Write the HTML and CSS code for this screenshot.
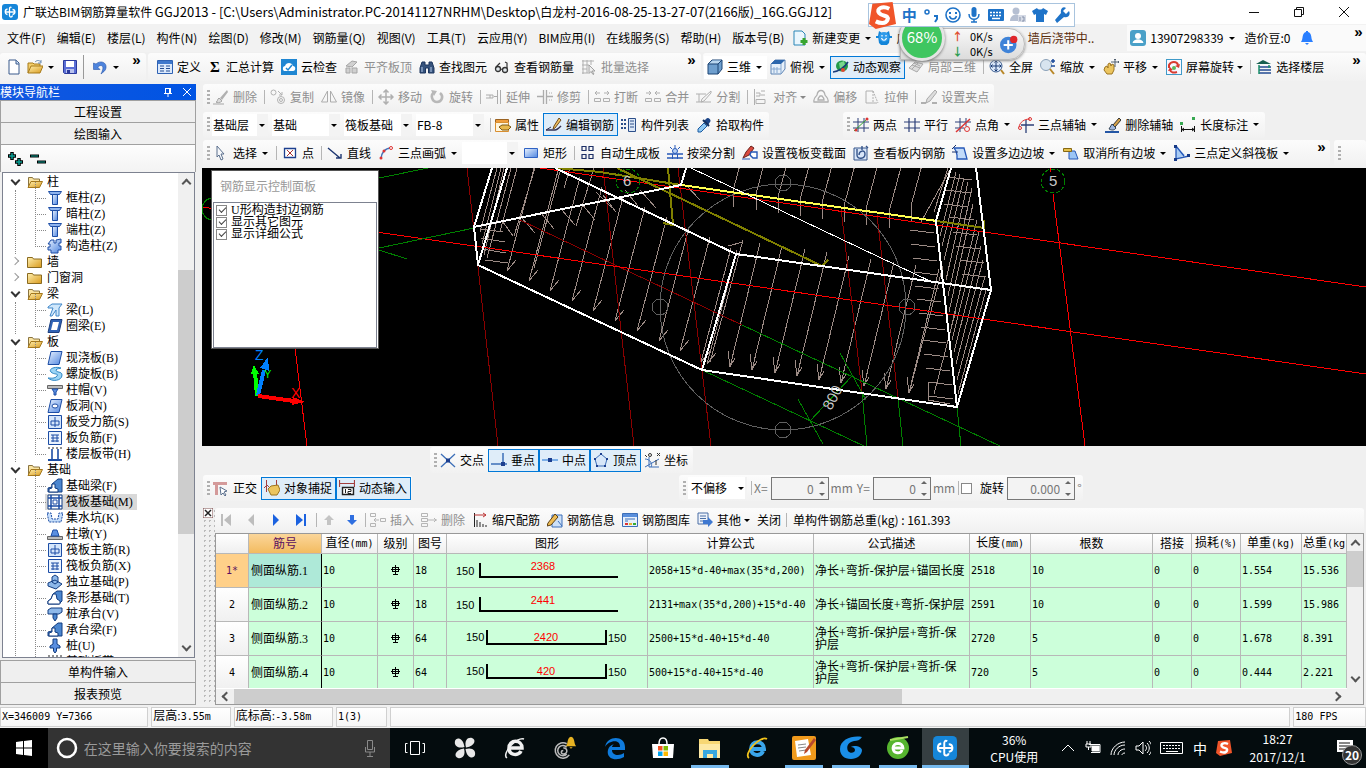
FILE: index.html
```html
<!DOCTYPE html>
<html lang="zh-CN">
<head>
<meta charset="utf-8">
<title>广联达BIM钢筋算量软件 GGJ2013</title>
<link rel="stylesheet" href="styles.css">
</head>
<body>
<svg class="defs" aria-hidden="true">
<defs>
<linearGradient id="gb" x1="0" y1="0" x2="1" y2="1"><stop offset="0" stop-color="#eaf3ff"/><stop offset="1" stop-color="#4f86e0"/></linearGradient>
<linearGradient id="gy" x1="0" y1="0" x2="1" y2="1"><stop offset="0" stop-color="#fff0b0"/><stop offset="1" stop-color="#d99a1c"/></linearGradient>
<symbol id="logo" viewBox="0 0 16 16"><rect width="16" height="16" rx="3" fill="#1686d9"/><path d="M9.500 3.500C8 2.500 7.500 4 7.500 5v6.500c0 2 2.500 2 3 0M3 8h9.500M5.500 5C2.500 5.500 2.500 10 5.500 10.500M10.500 5.500c3 0 3.500 4.500 0 5" stroke="#fff" stroke-width="1.300" fill="none"/></symbol>
<symbol id="new" viewBox="0 0 16 16"><path d="M3 1h7l3 3v11H3z" fill="#fff" stroke="#3b5a8c"/><path d="M10 1v4h3" fill="#cfe0f7" stroke="#3b5a8c"/></symbol>
<symbol id="open" viewBox="0 0 16 16"><path d="M1 14V4h5l1 1h6v3" fill="#f3cf6d" stroke="#a77a1a"/><path d="M1 14l3-7h12l-3 7z" fill="url(#gy)" stroke="#a77a1a"/><path d="M8 3c2-2 4-2 6 0M14 1v3h-3" stroke="#6a8db5" fill="none"/></symbol>
<symbol id="save" viewBox="0 0 16 16"><path d="M1.500 1.500h13v13h-12l-1-1z" fill="#5b6fd6" stroke="#2b3a9c"/><path d="M4 2h8v6H4z" fill="#fff"/><path d="M4 10h8v4H4z" fill="#b9c2ee"/><path d="M5 11h3v3H5z" fill="#2b3a9c"/></symbol>
<symbol id="undo" viewBox="0 0 16 16"><path d="M4 5c4-4 11-2 10 4-.5 3-3 4-5 6 2-4 3-8 0-8.500-2 0-2.500 1-3 2L8 10.500H1.500V4z" fill="#4d84dd" stroke="#2a56a8" stroke-width=".6"/></symbol>
<symbol id="define" viewBox="0 0 16 16"><path d="M.5 1.500h15v13H.5z" fill="#dce9fb" stroke="#2f62b4"/><path d="M1 2h14v3H1z" fill="#3f78cc"/><path d="M3 7h4M3 9.500h4M3 12h4M9 7h4M9 9.500h4M9 12h4" stroke="#234d93"/></symbol>
<symbol id="cloud" viewBox="0 0 16 16"><rect width="16" height="16" fill="#1f86d2"/><path d="M3 12c-2-2-1-5 1-5 1-4 7-4 8 0 3 0 3 5 0 5z" fill="#fff"/><path d="M5 9l2 2 4-5" stroke="#1f86d2" stroke-width="1.500" fill="none"/></symbol>
<symbol id="gslab" viewBox="0 0 16 16"><path d="M2 7l6-5 5 1-5 5zM2 9h4v5H2zM8 9h5v5H8z" fill="#d0d0d0" stroke="#a5a5a5"/></symbol>
<symbol id="bino" viewBox="0 0 16 16"><path d="M3 3h3v3h4V3h3l2 6v5H9.500V9h-3v5H1V9z" fill="#35527c" stroke="#1c355d"/><path d="M3 8v5M12 8v5" stroke="#b7ccec"/></symbol>
<symbol id="glass" viewBox="0 0 16 16"><circle cx="4" cy="10" r="2.500" fill="#dfe6ea" stroke="#333" stroke-width="1.300"/><circle cx="11" cy="11" r="2.500" fill="#dfe6ea" stroke="#333" stroke-width="1.300"/><path d="M2 8l4-4M13 9V4l-2-1M6 10l3 .5" stroke="#333" stroke-width="1.200" fill="none"/></symbol>
<symbol id="ggrid" viewBox="0 0 16 16"><path d="M1 2h12M1 6h7M1 10h5M1 14h6M2 1v14M6 1v13M10 1v5" stroke="#b0b0b0" fill="none"/><path d="M8 6l6 6-3 0 2 3-1 .5-2-3-2 2z" fill="#eee" stroke="#a0a0a0"/></symbol>
<symbol id="cube" viewBox="0 0 16 16"><path d="M1 5l4-4h10v9l-4 5H1z" fill="#6f9fce" stroke="#1d4474"/><path d="M1.500 5l4-3.500h9L11 5z" fill="#b9d6ef"/><path d="M1 5h10v10M11 5l4-4" fill="none" stroke="#1d4474"/></symbol>
<symbol id="cubetop" viewBox="0 0 16 16"><path d="M1 5l4-4h10v9l-4 5H1z" fill="#e6f0fa" stroke="#5d83b3"/><path d="M1 5l4-4h10l-4 4z" fill="#2c67ad"/><path d="M11 5v10M4 8v6M7 8v6M1 10h10" stroke="#86a8d0"/></symbol>
<symbol id="orbit" viewBox="0 0 16 16"><ellipse cx="9" cy="7" rx="6" ry="5.500" fill="#239a49"/><path d="M6 4l5-2 1 4-5 4z" fill="#78d68d"/><path d="M0 13C5 13 12 8 15 3" stroke="#173b7b" fill="none" stroke-width="1.500"/><circle cx="10" cy="11" r="2" fill="#e24731"/></symbol>
<symbol id="gray3d" viewBox="0 0 16 16"><path d="M1 9l6-6 8 2-6 8z" fill="#ddd" stroke="#aaa"/><path d="M4 6l8 3M6 4l6 3M4 10l6-6" stroke="#aaa"/></symbol>
<symbol id="zoomall" viewBox="0 0 16 16"><circle cx="7" cy="7" r="6" fill="#dbe8fa" stroke="#3c5d8f"/><path d="M7 2v10M2 7h10M5.500 3.500L7 2l1.500 1.500M5.500 10.500L7 12l1.500-1.500M3.500 5.500L2 7l1.500 1.500M10.500 5.500L12 7l-1.500 1.500" stroke="#183972" fill="none"/><path d="M12 11l3 4" stroke="#b88728" stroke-width="2"/></symbol>
<symbol id="zoom" viewBox="0 0 16 16"><circle cx="6" cy="6" r="5.500" fill="#d8e4ef" stroke="#8aa0b8"/><path d="M10 10l4 5" stroke="#b88728" stroke-width="2"/><path d="M11 2h4M13 0v4M11 7h4" stroke="#1b4a9a" stroke-width="1.500"/></symbol>
<symbol id="hand" viewBox="0 0 16 16"><path d="M2 8l2-1 1 2V5l2-1 1 3 1-2 2 1v5l-2 4H4L1 11z" fill="#ecc55f" stroke="#9d7521"/><path d="M12 0v8M8 3h8M11 1l1-1 1 1M15 2l1 1-1 1" stroke="#526070" fill="none"/></symbol>
<symbol id="rot3" viewBox="0 0 16 16"><rect x=".5" y=".5" width="15" height="15" fill="#f7f7ff" stroke="#3f9ac8"/><path d="M3 9V6c2-4 8-4 9 0M11 13c-3 1-6 1-7-2" stroke="#d83b30" stroke-width="2" fill="none"/><path d="M14 5l-1 4-4-2zM2 12l2-4 3 3z" fill="#d83b30"/><circle cx="8" cy="9" r="2" fill="#5cb85c"/></symbol>
<symbol id="floors" viewBox="0 0 16 16"><path d="M0 5l7-4 8 4z" fill="#175e4f"/><path d="M3 8h12M3 11h12M3 14h12" stroke="#234b93" stroke-width="1.500"/><path d="M3 6v9M13 6v3" stroke="#1b8f6a" stroke-width="1.500"/></symbol>
<symbol id="chg" viewBox="0 0 16 16"><path d="M2 1h8l3 3v11H2z" fill="#eaf6fd" stroke="#2a86b7"/><path d="M12 8v7M8.500 11.500h7" stroke="#38a52f" stroke-width="3"/></symbol>
<symbol id="pig" viewBox="0 0 16 16"><path d="M3 1l3 2h4l3-2 1 5-1 7-2 2H5l-2-2-1-7z" fill="#1485d8"/><circle cx="8" cy="7" r="5" fill="#2f9bea"/><path d="M5.500 8c1 3 4 3 5 0" stroke="#fff" stroke-width="1.200" fill="none"/><path d="M6 5v1.500M10 5v1.500" stroke="#fff" stroke-width="1.200"/><path d="M0 7h3M13 7h3" stroke="#1485d8" stroke-width="2"/></symbol>
<symbol id="user" viewBox="0 0 16 16"><rect width="16" height="16" rx="3" fill="#4aa0c8"/><circle cx="8" cy="6" r="3" fill="#fff"/><path d="M2.500 13c1-5 10-5 11 0z" fill="#fff"/></symbol>
<symbol id="bell" viewBox="0 0 16 16"><path d="M7 1h2v1c4 1 3 6 4 8l1 2H2l1-2c1-2 0-7 4-8z" fill="#2a7fff"/><path d="M6 13h4l-2 2z" fill="#2a7fff"/></symbol>
<symbol id="brush" viewBox="0 0 16 16"><path d="M14 1L7 9l2 2 6-8z" fill="#b0b0b0"/><path d="M6 9l3 3c-2 2-5 2-6 1 2 0 1-3 3-4z" fill="#ddd" stroke="#a5a5a5"/><path d="M0 15h11" stroke="#a5a5a5"/></symbol>
<symbol id="copy" viewBox="0 0 16 16" fill="none" stroke="#b2b2b2"><circle cx="3.500" cy="3.500" r="2.500"/><circle cx="11" cy="11" r="3.500"/><circle cx="11" cy="11" r="1.500"/><path d="M8 2l4 4M12 3v3H9"/></symbol>
<symbol id="mirror" viewBox="0 0 16 16" fill="none" stroke="#acacac"><path d="M6.500 2v11L.5 13zM9.500 2v11l6 0z"/></symbol>
<symbol id="move" viewBox="0 0 16 16" fill="none" stroke="#b0b0b0" stroke-width="1.500"><path d="M8 1v14M1 8h14M5.500 3.500L8 1l2.500 2.500M5.500 12.500L8 15l2.500-2.500M3.500 5.500L1 8l2.500 2.500M12.500 5.500L15 8l-2.500 2.500"/></symbol>
<symbol id="rotate" viewBox="0 0 16 16"><path d="M5 3.500C1 6 3 13 8 13s7-6 3-9" fill="none" stroke="#b8b8b8" stroke-width="2.600"/><path d="M2 1l6 1-3 5z" fill="#b8b8b8"/></symbol>
<symbol id="extend" viewBox="0 0 16 16" fill="none" stroke="#acacac"><path d="M0 6h7v3H0M8 7.500h3M11.500 1v14M14.500 1v14M4 6v3"/></symbol>
<symbol id="trim" viewBox="0 0 16 16" fill="none" stroke="#acacac"><path d="M6.500 1v14M9.500 1v14M0 7.500h6M10 7.500h6" stroke-width="1.300"/><path d="M12 4h3M12 11h3" stroke-dasharray="1 1"/></symbol>
<symbol id="break" viewBox="0 0 16 16" fill="none" stroke="#b0b0b0"><path d="M1 4h5M10 4h5M3 2L1 4l2 2M13 2l2 2-2 2M.5 9.500h6v3h-6zM9.500 9.500h6v3h-6z"/></symbol>
<symbol id="merge" viewBox="0 0 16 16" fill="none" stroke="#b0b0b0"><path d="M1 4h5M10 4h5M4 2l2 2-2 2M12 2l-2 2 2 2M.5 9.500h6v3h-6zM9.500 9.500h6v3h-6z"/></symbol>
<symbol id="split" viewBox="0 0 16 16" fill="none" stroke="#b0b0b0"><path d="M0 5h10M0 13h15M3 5v8M15 2L6 10l-1 3 3-1 7-8z"/></symbol>
<symbol id="align" viewBox="0 0 16 16" fill="none" stroke="#b0b0b0"><path d="M1.500 0v16M3 4h4v3H3M3 10.500h9v4H3zM8 2h4M12 6H8"/></symbol>
<symbol id="offset" viewBox="0 0 16 16" fill="none" stroke="#b0b0b0" stroke-width="1.300"><path d="M1 13c-1-4 2-5 3-7 1-6 7-6 8 0 1 2 4 3 3 7zM5 11c0-2 1-3 2-4h2c1 1 2 2 2 4z"/></symbol>
<symbol id="stretch" viewBox="0 0 16 16" fill="none" stroke="#b0b0b0"><path d="M9 2H2v12h11"/><path d="M9 2v12M9 2l5 12" stroke-dasharray="2 1"/></symbol>
<symbol id="grip" viewBox="0 0 16 16"><path d="M0 14h5M11 14h5" stroke="#b0b0b0" stroke-width="2"/><path d="M14 1l-8 9-1 4 4-2 7-9z" fill="#ddd" stroke="#aaa"/></symbol>
<symbol id="prop" viewBox="0 0 16 16"><path d="M.5 2.500h13v3H.5z" fill="#ef9d3c" stroke="#9b6322"/><path d="M.5 5.500h13v9H.5z" fill="#fff5dd" stroke="#d98f30"/><path d="M4 10l3-2h6l3 2-3 3H7z" fill="#e8b84c" stroke="#7d5a17"/></symbol>
<symbol id="editbar" viewBox="0 0 16 16"><path d="M0 13h9c2 0 4-2 6-4" stroke="#335" stroke-width="1.600" fill="none"/><path d="M13 1l2 2-6 8-2 1 1-3z" fill="#f0c15f" stroke="#704c1d"/><path d="M0 13l5-3" stroke="#335" fill="none"/></symbol>
<symbol id="list" viewBox="0 0 16 16"><path d="M0 3h5M0 7h5M0 11h5" stroke="#2c4f8a" stroke-width="2" stroke-dasharray="2 1"/><path d="M7.500 1.500h7v13h-7z" fill="#dbe7f7" stroke="#2c4f8a"/><path d="M9 4h4M9 7h4M9 10h4" stroke="#2c4f8a"/></symbol>
<symbol id="pick" viewBox="0 0 16 16"><path d="M8 6l3 3-6 6-3 0 0-3z" fill="#8ec8f3" stroke="#1c5aa0"/><path d="M10 2c2-3 6 1 4 3l-2 3-4-4z" fill="#1c4587"/><path d="M7 3l6 6" stroke="#12305f" stroke-width="2"/></symbol>
<symbol id="twop" viewBox="0 0 16 16" fill="none"><path d="M0 5h16M0 11h16M5 1v14M11 1v14" stroke="#2c3f78"/><path d="M1 14L14 2" stroke="#38a52f"/><circle cx="3" cy="13" r="1.500" fill="#d33"/><circle cx="14" cy="2" r="1.500" fill="#d33"/></symbol>
<symbol id="para" viewBox="0 0 16 16"><path d="M0 5h16M0 11h16M5 1v14M11 1v14" stroke="#2c3f78" fill="none" stroke-width="1.200"/></symbol>
<symbol id="pang" viewBox="0 0 16 16" fill="none"><path d="M0 5h16M0 11h9M5 1v14M11 1v8" stroke="#2c3f78"/><path d="M1 15L15 2" stroke="#d33" stroke-width="1.500"/><circle cx="12" cy="12" r="2.500" stroke="#d33"/></symbol>
<symbol id="arcax" viewBox="0 0 16 16" fill="none"><path d="M1 10C2 5 6 2 12 2" stroke="#d33"/><path d="M3 8h13M8 3v13" stroke="#2c3f78" stroke-width="1.300"/><circle cx="12" cy="2" r="1.500" stroke="#d33"/><circle cx="2" cy="11" r="1.500" stroke="#d33"/></symbol>
<symbol id="delax" viewBox="0 0 16 16"><path d="M14 1L8 8l2 2 6-7z" fill="#d5a249" stroke="#333"/><path d="M7 7l4 4c-2 3-5 2-7 1z" fill="#9fb6dd" stroke="#345"/><path d="M0 15h14" stroke="#2456a5" stroke-width="2"/></symbol>
<symbol id="dim" viewBox="0 0 16 16"><path d="M1.500 9v6M14.500 9v6M2 12.500h12M4 11l-2 1.500L4 14M12 11l2 1.500-2 1.500" stroke="#111" fill="none"/><path d="M0 5h3v3H0zM12 0h3v3h-3z" fill="#38a852"/></symbol>
<symbol id="cursor" viewBox="0 0 16 16"><path d="M4 1l7 8H8l2 5-2 1-2-5-2 2z" fill="#f6f8fb" stroke="#5a6f8c"/></symbol>
<symbol id="ptx" viewBox="0 0 16 16"><path d="M2.500 3.500h11v9h-11z" fill="#fff" stroke="#1c3f8f" stroke-width="1.300"/><path d="M5 5l6 6M11 5l-6 6" stroke="#a33"/></symbol>
<symbol id="line" viewBox="0 0 16 16"><path d="M1 3l12 10M9 13h5V9" stroke="#1c3570" fill="none" stroke-width="1.400"/></symbol>
<symbol id="arc" viewBox="0 0 16 16"><path d="M3 14C3 8 7 3 13 3" stroke="#4472b8" fill="none" stroke-width="1.500"/><circle cx="3" cy="13" r="1.500" fill="#d33"/><circle cx="6" cy="6" r="1.500" fill="#d33"/><circle cx="13" cy="3" r="1.500" fill="#fff" stroke="#d33"/></symbol>
<symbol id="rect" viewBox="0 0 16 16"><path d="M1.500 3.500h13v9h-13z" fill="url(#gb)" stroke="#2f62c4"/></symbol>
<symbol id="auto" viewBox="0 0 16 16" fill="none" stroke="#1d2f66" stroke-width="1.200"><path d="M2 1.500h4v4H2zM9 1.500h4v4H9zM2 9.500h4v4H2zM9 9.500h4v4H9z"/></symbol>
<symbol id="beam" viewBox="0 0 16 16"><path d="M0 9h16M0 13h16" stroke="#2658b8" stroke-width="1.500"/><circle cx="8" cy="6" r="2.500" fill="#b7d1f5" stroke="#2658b8"/><path d="M8 0v3M3 2l2 2M13 2l-2 2M5.500 9v5M10.500 9v5" stroke="#2658b8"/></symbol>
<symbol id="sect" viewBox="0 0 16 16"><path d="M1 13l3-6 5-6 3 2-5 7z" fill="#d94a3f" stroke="#6b211b"/><path d="M9 7h6v6h-4l-3-3z" fill="#fff" stroke="#2658b8" stroke-width="1.400"/><path d="M0 14h8" stroke="#2658b8"/></symbol>
<symbol id="viewbar" viewBox="0 0 16 16"><path d="M1 3h13v12H1z" fill="#d9e6f8" stroke="#35548a"/><path d="M4 4v6c0 5 8 4 8-1s-6-3-6 1M9 1v4M13 1l2 2" stroke="#35548a" fill="none" stroke-width="1.400"/></symbol>
<symbol id="slope" viewBox="0 0 16 16"><path d="M4 6L2 3h10l3 11H5v-4z" fill="#c3dbf9" stroke="#2658b8" stroke-width="1.300"/><path d="M0 7l6 0M0 4l4-4" stroke="#1c3570"/></symbol>
<symbol id="unslope" viewBox="0 0 16 16"><path d="M6 6h6l3 8H6z" fill="#9cc5f5" stroke="#2658b8"/><path d="M.5 3.500h8v3h-8z" fill="#e5c14c" stroke="#876812"/></symbol>
<symbol id="tri" viewBox="0 0 16 16"><path d="M2 2v12l9-4z" fill="#a9ccf5"/><path d="M2 1v13l13-3M2 1l8 10" stroke="#2658b8" stroke-width="1.300" fill="none"/><path d="M0 0h3v3H0zM0 13h3v3H0zM13 9h3v3h-3z" fill="#173a86"/></symbol>
<symbol id="isect" viewBox="0 0 16 16"><path d="M1 2l14 13M15 2L1 15" stroke="#3d6fb8" fill="none" stroke-width="1.300"/><path d="M6 6.500h4v4H6z" fill="#1c3f8f"/></symbol>
<symbol id="perp" viewBox="0 0 16 16"><path d="M0 12h16M12 1v12" stroke="#3d6fb8" stroke-width="1.500"/><path d="M10 10h4v4h-4z" fill="#1c3f8f"/></symbol>
<symbol id="mid" viewBox="0 0 16 16"><path d="M0 8h16" stroke="#5c9ae0" stroke-width="1.500"/><path d="M6 6h4v4H6z" fill="#1c3f8f"/></symbol>
<symbol id="vert" viewBox="0 0 16 16"><path d="M8 2l6 5-2 7H4L2 7z" fill="#d7e7f9" stroke="#3d6fb8"/><path d="M7 1h2v2H7zM1 6h2v2H1zM13 6h2v2h-2zM3 13h2v2H3zM11 13h2v2h-2z" fill="#1c3f8f"/></symbol>
<symbol id="coord" viewBox="0 0 16 16"><path d="M1 7c5 0 8 5 6 8M1 15l14-8M5 5v10h10" stroke="#3d6fb8" fill="none"/><circle cx="6" cy="3" r="1.500" fill="none" stroke="#333"/><path d="M1 3l2 2M13 1l3 3M16 1l-3 3M12 8v5" stroke="#333"/></symbol>
<symbol id="ortho" viewBox="0 0 16 16"><path d="M0 2h14v3H5v10H2V5H0z" fill="#d49a9a"/><path d="M7 7l7 4-3 1 2 3-1 1-2-3-2 2z" fill="#fff" stroke="#5a6f8c"/></symbol>
<symbol id="osnap" viewBox="0 0 16 16"><path d="M2.500 0v12M12.500 0v6M0 8l3-3 3 3" stroke="#a33f3f" fill="none"/><path d="M4 9l3-3 7-1 2 5-3 5H7z" fill="#ecc55f" stroke="#9d7521"/></symbol>
<symbol id="dyn" viewBox="0 0 16 16"><path d="M.5 0v7M15.500 0v7M1 3.500h14" stroke="#a33f3f" stroke-width="1.200"/><path d="M3.500 7.500h11v7h-11z" fill="#fff" stroke="#222" stroke-width="1.400"/><path d="M6.500 9v4M9 9.500h3v2H9v2h3" stroke="#222" fill="none"/></symbol>
<symbol id="first" viewBox="0 0 16 16"><path d="M3 2h2v12H3zM13 2v12L6 8z" fill="#bdbdbd"/></symbol>
<symbol id="prev" viewBox="0 0 16 16"><path d="M11 2v12L5 8z" fill="#bdbdbd"/></symbol>
<symbol id="next" viewBox="0 0 16 16"><path d="M5 2v12l6-6z" fill="#1b62e0"/></symbol>
<symbol id="last" viewBox="0 0 16 16"><path d="M3 2v12l7-6z" fill="#1b62e0"/><path d="M11 2h2v12h-2z" fill="#1b62e0"/></symbol>
<symbol id="up" viewBox="0 0 16 16"><path d="M8 3l5 5h-3v5H6V8H3z" fill="#c4c4c4"/></symbol>
<symbol id="down" viewBox="0 0 16 16"><path d="M8 13l5-5h-3V3H6v5H3z" fill="#2f6fe0"/></symbol>
<symbol id="ins" viewBox="0 0 16 16" fill="none" stroke="#b5b5b5"><path d="M.5 1.500h5v3h-5zM.5 11.500h5v3h-5zM10.500 6.500h5v3h-5zM4 8h5M6 6L4 8l2 2"/></symbol>
<symbol id="del" viewBox="0 0 16 16" fill="none" stroke="#b5b5b5"><path d="M.5 1.500h6v3h-6zM.5 6.500h6v3h-6zM.5 11.500h6v3h-6zM7 8h9M13 6l2 2-2 2"/></symbol>
<symbol id="scale" viewBox="0 0 16 16"><path d="M2.500 1v14M5 8v7M8 10v5M11 12v3M14 13v2" stroke="#222"/><path d="M2 3h12M11 1l3 2-3 2" stroke="#b33" fill="none"/></symbol>
<symbol id="info" viewBox="0 0 16 16"><path d="M5 3h10v12H5z" fill="#cde0f7" stroke="#3d6fb8"/><path d="M1 11l7-9 3 3-7 8-4 1z" fill="#eebc55" stroke="#5d4113"/><path d="M11 9l4 5" stroke="#3d6fb8"/></symbol>
<symbol id="lib" viewBox="0 0 16 16"><path d="M.5 1.500h15v13H.5z" fill="#e7f0fb" stroke="#3d6fb8"/><path d="M1 2h14v3H1z" fill="#5a8fdc"/><path d="M3 7h10M3 9h3" stroke="#3d6fb8"/><path d="M3 12h3" stroke="#d33" stroke-width="2"/><path d="M7 12h3" stroke="#e5b52a" stroke-width="2"/><path d="M11 12h3" stroke="#3a3" stroke-width="2"/></symbol>
<symbol id="other" viewBox="0 0 16 16"><path d="M1 1h10v11H1z" fill="#eef3fb" stroke="#4a6fa5"/><path d="M3 4h6M3 6.500h6M3 9h4" stroke="#4a6fa5"/><path d="M6 8h5V5l5 5-5 5v-3H6z" fill="#3f78d0"/></symbol>
<symbol id="fopen" viewBox="0 0 16 16"><path d="M1.500 13V3.500h4l1 1.500h6v2" fill="#f9e3a0" stroke="#8a7440"/><path d="M1 13.500l3-6h11.500l-3 6z" fill="url(#gy)" stroke="#a5781c"/></symbol>
<symbol id="fclosed" viewBox="0 0 16 16"><path d="M.5 13.500v-10h5l1 1.500h8v8.500z" fill="url(#gy)" stroke="#8a6a20"/></symbol>
<symbol id="col" viewBox="0 0 16 16"><path d="M1.500 1.500h13l-2 3h-9z" fill="#8fb4ee" stroke="#1c4da5"/><path d="M5.500 4.500h5v10h-5z" fill="url(#gb)" stroke="#1c4da5"/></symbol>
<symbol id="ccol" viewBox="0 0 16 16"><path d="M4 2h3v3h2v-3l5-1v4h-2v3h2v4h-3v3H4v-3H1V9h2V6H1z" fill="url(#gb)" stroke="#1c4da5"/></symbol>
<symbol id="bm" viewBox="0 0 16 16"><path d="M1 5l4-3h10l-3 4v8H9V8L5 14H3l3-8H1z" fill="#cfe7fb" stroke="#3f86c8"/></symbol>
<symbol id="ring" viewBox="0 0 16 16"><path d="M4 1.500h11l-3 13H1z" fill="#2f62b4" stroke="#1c3f80"/><path d="M6 4h6l-2 8H4z" fill="#fff"/></symbol>
<symbol id="slab" viewBox="0 0 16 16"><path d="M4 1.500h11l-3 13H1z" fill="url(#gb)" stroke="#1c4da5"/></symbol>
<symbol id="spiral" viewBox="0 0 16 16"><path d="M14 2C8 0 1 3 4 6s8 1 6 4-7 2-9 2c4 4 14 3 14-3 0-4-6-2-6-5 1-2 4-1 5-2z" fill="#9bd4f5" stroke="#2e86c4"/></symbol>
<symbol id="cap" viewBox="0 0 16 16"><path d="M.5 3.500h15v3H.5z" fill="#bbb" stroke="#666"/><path d="M5 7h6l-2 3v3H7v-3z" fill="#5b8fe0" stroke="#1c4da5"/></symbol>
<symbol id="hole" viewBox="0 0 16 16"><path d="M4 1.500h11l-3 13H1z" fill="url(#gb)" stroke="#1c4da5"/><ellipse cx="8" cy="8" rx="3" ry="2" fill="#fff" stroke="#1c4da5"/></symbol>
<symbol id="rb1" viewBox="0 0 16 16"><path d="M1.500 1.500h13v13h-13z" fill="#d5e6fb" stroke="#1c4da5"/><path d="M4 7v4h8V7M8 3v10M4 7h8" stroke="#1c4da5" fill="none"/></symbol>
<symbol id="rb2" viewBox="0 0 16 16"><path d="M1.500 1.500h13v13h-13z" fill="#eaf3ff" stroke="#1c4da5"/><path d="M4 5h8M4 11h8M4 8h8M6 5v7M10 5v7" stroke="#1c4da5" fill="none"/></symbol>
<symbol id="band" viewBox="0 0 16 16"><path d="M1 14h14" stroke="#1c4da5" stroke-width="2"/><path d="M1 2h14" stroke="#222" stroke-dasharray="2 2"/><path d="M5 3v10M11 3v10" stroke="#1c4da5" stroke-width="1.600"/></symbol>
<symbol id="fbeam" viewBox="0 0 16 16"><path d="M1 14v-4l4-1V6l6-5h4v13z" fill="#4b86cf" stroke="#123c80"/><path d="M2 14v-3l3-1V6h3v4l3 1v3z" fill="#fff" stroke="#123c80"/></symbol>
<symbol id="raft" viewBox="0 0 16 16"><path d="M1 1h14v14H1z" fill="#fff" stroke="#123c80"/><path d="M4 1v14M12 1v14M1 4h14M1 12h14" stroke="#1c4da5" stroke-width="1.500"/><path d="M6 6h4v4H6z" fill="none" stroke="#1c4da5"/></symbol>
<symbol id="pit" viewBox="0 0 16 16"><path d="M0 3h4l1 6h6l1-6h4l-2 9H2z" fill="#c6defa" stroke="#1c4da5" stroke-dasharray="2 1"/></symbol>
<symbol id="pier" viewBox="0 0 16 16"><path d="M.5 10.500h15v3H.5z" fill="#bbb" stroke="#666"/><path d="M4 10l2-6h4l2 6z" fill="#5b8fe0" stroke="#1c4da5"/></symbol>
<symbol id="foot" viewBox="0 0 16 16"><path d="M1 9l7-3 7 4-6 5-8-3zM5 3l3-2 3 2v5L8 10 5 8z" fill="#8db8ea" stroke="#123c80"/></symbol>
<symbol id="strip" viewBox="0 0 16 16"><path d="M1 14v-3l3-2 2-5 4-3h5v10l-3 3z" fill="#4b86cf" stroke="#123c80"/><path d="M1 14v-3l3-2 2-5h3l1 5 3 2v3z" fill="#fff" stroke="#123c80"/></symbol>
<symbol id="pcap" viewBox="0 0 16 16"><path d="M1 4l3-2h11v4l-3 2H1z" fill="#8db8ea" stroke="#123c80"/><path d="M6 8h4v4l-2 3-2-3z" fill="#4b86cf" stroke="#123c80"/></symbol>
<symbol id="pile" viewBox="0 0 16 16"><path d="M6 1h4v5l3 2v2H9.500v3L8 15l-1.500-2v-3H3V8l3-2z" fill="#5b8fe0" stroke="#123c80"/></symbol>
<symbol id="sogou" viewBox="0 0 16 16"><path d="M2 1l12-1 2 13-12 3-4-3z" fill="#f0552a"/><path d="M12 4C8 2 4 4 6 6.500s6 1 5 4-5 2-7 1" stroke="#fff" stroke-width="2.400" fill="none"/></symbol>
</defs>
</svg>

<header class="titlebar">
  <svg class="i"><use href="#logo"/></svg>
  <h1>广联达BIM钢筋算量软件 <span>GGJ2013 - [C:\Users\Administrator.PC-20141127NRHM\Desktop\</span>白龙村<span>-2016-08-25-13-27-07(2166</span>版<span>)_16G.GGJ12]</span></h1>
  <div class="winbtns">
    <button aria-label="最小化"><svg viewBox="0 0 12 12"><path d="M1 6.500h10"/></svg></button>
    <button aria-label="还原"><svg viewBox="0 0 12 12"><path d="M3.500 3.500v-2h7v7h-2M1.500 3.500h7v7h-7z"/></svg></button>
    <button aria-label="关闭"><svg viewBox="0 0 12 12"><path d="M1 1l10 10M11 1L1 11"/></svg></button>
  </div>
</header>

<nav class="menubar">
  <div class="menus">
    <button>文件(F)</button><button>编辑(E)</button><button>楼层(L)</button><button>构件(N)</button><button>绘图(D)</button><button>修改(M)</button><button>钢筋量(Q)</button><button>视图(V)</button><button>工具(T)</button><button>云应用(Y)</button><button>BIM应用(I)</button><button>在线服务(S)</button><button>帮助(H)</button><button>版本号(B)</button>
    <button class="t dd"><svg class="i"><use href="#chg"/></svg>新建变更</button>
    <button class="t"><svg class="i"><use href="#pig"/></svg>广</button>
  </div>
  <a class="news" href="#">墙后浇带中..</a>
  <div class="account">
    <button class="t dd"><svg class="i"><use href="#user"/></svg>13907298339</button>
    <span>造价豆:0</span>
    <svg class="i"><use href="#bell"/></svg>
    <button class="more">»</button>
  </div>
</nav>

<div class="toprow">
  <div class="bar file">
    <button class="t" aria-label="新建"><svg class="i"><use href="#new"/></svg></button>
    <button class="t dd" aria-label="打开"><svg class="i"><use href="#open"/></svg></button>
    <button class="t" aria-label="保存"><svg class="i"><use href="#save"/></svg></button>
    <span class="sep tall"></span>
    <button class="t dd" aria-label="撤销"><svg class="i"><use href="#undo"/></svg></button>
    <button class="more">»</button>
  </div>
  <div class="bar">
    <span class="lead"></span>
    <button class="t"><svg class="i"><use href="#define"/></svg>定义</button>
    <button class="t"><b class="sigma">Σ</b>汇总计算</button>
    <button class="t"><svg class="i"><use href="#cloud"/></svg>云检查</button>
    <button class="t" disabled><svg class="i"><use href="#gslab"/></svg>平齐板顶</button>
    <button class="t"><svg class="i"><use href="#bino"/></svg>查找图元</button>
    <button class="t"><svg class="i"><use href="#glass"/></svg>查看钢筋量</button>
    <button class="t" disabled><svg class="i"><use href="#ggrid"/></svg>批量选择</button>
    <button class="more">»</button>
  </div>
  <div class="bar view">
    <button class="t dd wh"><svg class="i"><use href="#cube"/></svg>三维</button>
    <button class="t dd"><svg class="i"><use href="#cubetop"/></svg>俯视</button>
    <button class="t on"><svg class="i"><use href="#orbit"/></svg>动态观察</button>
    <button class="t" disabled><svg class="i"><use href="#gray3d"/></svg>局部三维</button>
    <span class="sep"></span>
    <button class="t"><svg class="i"><use href="#zoomall"/></svg>全屏</button>
    <button class="t dd"><svg class="i"><use href="#zoom"/></svg>缩放</button>
    <button class="t dd"><svg class="i"><use href="#hand"/></svg>平移</button>
    <button class="t dd near"><svg class="i"><use href="#rot3"/></svg>屏幕旋转</button>
    <span class="sep"></span>
    <button class="t"><svg class="i"><use href="#floors"/></svg>选择楼层</button>
    <button class="more">»</button>
  </div>
</div>

<div class="work">
<aside class="side">
  <h2>模块导航栏<span><svg viewBox="0 0 10 10"><path d="M2.500 1v5M7.500 1v5M2 1.500h6M1 6.500h8M5 6v4M6.500 1v5"/></svg><svg viewBox="0 0 10 10"><path d="M1 1l8 8M9 1L1 9"/></svg></span></h2>
  <button class="tab">工程设置</button>
  <button class="tab">绘图输入</button>
  <div class="pm">
    <svg viewBox="0 0 44 16" width="44" height="16"><path d="M5 1v8M1 5h8M12 7v8M8 11h8" stroke="#000" stroke-width="3.500"/><path d="M5 2v6M2 5h6M12 8v6M9 11h6" stroke="#0aa094" stroke-width="1.500"/><path d="M23 5h9M30 11h9" stroke="#000" stroke-width="3"/><path d="M24 5h7M31 11h7" stroke="#0aa094"/></svg>
  </div>
  <div class="treebox">
    <ul class="tree">
      <li class="g o"><svg class="i"><use href="#fopen"/></svg>柱
        <ul><li><svg class="i"><use href="#col"/></svg>框柱(Z)</li><li><svg class="i"><use href="#col"/></svg>暗柱(Z)</li><li><svg class="i"><use href="#col"/></svg>端柱(Z)</li><li><svg class="i"><use href="#ccol"/></svg>构造柱(Z)</li></ul></li>
      <li class="g"><svg class="i"><use href="#fclosed"/></svg>墙</li>
      <li class="g"><svg class="i"><use href="#fclosed"/></svg>门窗洞</li>
      <li class="g o"><svg class="i"><use href="#fopen"/></svg>梁
        <ul><li><svg class="i"><use href="#bm"/></svg>梁(L)</li><li><svg class="i"><use href="#ring"/></svg>圈梁(E)</li></ul></li>
      <li class="g o"><svg class="i"><use href="#fopen"/></svg>板
        <ul><li><svg class="i"><use href="#slab"/></svg>现浇板(B)</li><li><svg class="i"><use href="#spiral"/></svg>螺旋板(B)</li><li><svg class="i"><use href="#cap"/></svg>柱帽(V)</li><li><svg class="i"><use href="#hole"/></svg>板洞(N)</li><li><svg class="i"><use href="#rb1"/></svg>板受力筋(S)</li><li><svg class="i"><use href="#rb2"/></svg>板负筋(F)</li><li><svg class="i"><use href="#band"/></svg>楼层板带(H)</li></ul></li>
      <li class="g o"><svg class="i"><use href="#fopen"/></svg>基础
        <ul><li><svg class="i"><use href="#fbeam"/></svg>基础梁(F)</li><li class="sel"><svg class="i"><use href="#raft"/></svg>筏板基础(M)</li><li><svg class="i"><use href="#pit"/></svg>集水坑(K)</li><li><svg class="i"><use href="#pier"/></svg>柱墩(Y)</li><li><svg class="i"><use href="#rb1"/></svg>筏板主筋(R)</li><li><svg class="i"><use href="#rb2"/></svg>筏板负筋(X)</li><li><svg class="i"><use href="#foot"/></svg>独立基础(P)</li><li><svg class="i"><use href="#strip"/></svg>条形基础(T)</li><li><svg class="i"><use href="#pcap"/></svg>桩承台(V)</li><li><svg class="i"><use href="#fbeam"/></svg>承台梁(F)</li><li><svg class="i"><use href="#pile"/></svg>桩(U)</li><li><svg class="i"><use href="#band"/></svg>基础板带(W)</li></ul></li>
    </ul>
    <div class="vs"><i class="a up"></i><span class="s1"></span><span class="thumb"></span><span class="s2"></span><i class="a dn"></i></div>
  </div>
  <button class="tab">单构件输入</button>
  <button class="tab">报表预览</button>
</aside>

<main class="main">
  <div class="row r2"><div class="bar">
    <span class="grip"></span>
    <button class="t" disabled><svg class="i"><use href="#brush"/></svg>删除</button><span class="sep"></span>
    <button class="t" disabled><svg class="i"><use href="#copy"/></svg>复制</button>
    <button class="t" disabled><svg class="i"><use href="#mirror"/></svg>镜像</button><span class="sep"></span>
    <button class="t" disabled><svg class="i"><use href="#move"/></svg>移动</button>
    <button class="t" disabled><svg class="i"><use href="#rotate"/></svg>旋转</button><span class="sep"></span>
    <button class="t" disabled><svg class="i"><use href="#extend"/></svg>延伸</button>
    <button class="t" disabled><svg class="i"><use href="#trim"/></svg>修剪</button><span class="sep"></span>
    <button class="t" disabled><svg class="i"><use href="#break"/></svg>打断</button>
    <button class="t" disabled><svg class="i"><use href="#merge"/></svg>合并</button>
    <button class="t" disabled><svg class="i"><use href="#split"/></svg>分割</button><span class="sep"></span>
    <button class="t dd near" disabled><svg class="i"><use href="#align"/></svg>对齐</button>
    <button class="t" disabled><svg class="i"><use href="#offset"/></svg>偏移</button>
    <button class="t" disabled><svg class="i"><use href="#stretch"/></svg>拉伸</button><span class="sep"></span>
    <button class="t" disabled><svg class="i"><use href="#grip"/></svg>设置夹点</button>
  </div></div>

  <div class="row r3"><div class="bar">
    <span class="grip"></span>
    <span class="combo c1"><select aria-label="楼层"><option>基础层</option></select></span>
    <span class="combo"><select aria-label="构件类型"><option>基础</option></select></span>
    <span class="combo"><select aria-label="构件"><option>筏板基础</option></select></span>
    <span class="combo"><select aria-label="名称"><option>FB-8</option></select></span>
    <span class="sep"></span>
    <button class="t"><svg class="i"><use href="#prop"/></svg>属性</button>
    <button class="t on"><svg class="i"><use href="#editbar"/></svg>编辑钢筋</button>
    <button class="t"><svg class="i"><use href="#list"/></svg>构件列表</button>
    <button class="t"><svg class="i"><use href="#pick"/></svg>拾取构件</button>
  </div>
  <div class="bar axis">
    <span class="grip"></span>
    <button class="t"><svg class="i"><use href="#twop"/></svg>两点</button>
    <button class="t"><svg class="i"><use href="#para"/></svg>平行</button>
    <button class="t dd"><svg class="i"><use href="#pang"/></svg>点角</button>
    <button class="t dd"><svg class="i"><use href="#arcax"/></svg>三点辅轴</button>
    <button class="t"><svg class="i"><use href="#delax"/></svg>删除辅轴</button>
    <button class="t dd"><svg class="i"><use href="#dim"/></svg>长度标注</button>
  </div></div>

  <div class="row r4"><div class="bar grow">
    <span class="grip"></span>
    <button class="t dd"><svg class="i"><use href="#cursor"/></svg>选择</button><span class="sep"></span>
    <button class="t"><svg class="i"><use href="#ptx"/></svg>点</button><span class="sep"></span>
    <button class="t"><svg class="i"><use href="#line"/></svg>直线</button>
    <button class="t dd"><svg class="i"><use href="#arc"/></svg>三点画弧</button>
    <span class="combo c1"><select aria-label="画法"><option></option></select></span>
    <button class="t"><svg class="i"><use href="#rect"/></svg>矩形</button><span class="sep"></span>
    <button class="t"><svg class="i"><use href="#auto"/></svg>自动生成板</button>
    <button class="t"><svg class="i"><use href="#beam"/></svg>按梁分割</button>
    <button class="t"><svg class="i"><use href="#sect"/></svg>设置筏板变截面</button>
    <button class="t"><svg class="i"><use href="#viewbar"/></svg>查看板内钢筋</button>
    <button class="t dd"><svg class="i"><use href="#slope"/></svg>设置多边边坡</button>
    <button class="t dd"><svg class="i"><use href="#unslope"/></svg>取消所有边坡</button>
    <button class="t dd"><svg class="i"><use href="#tri"/></svg>三点定义斜筏板</button>
    <button class="more">»</button>
  </div>
  <div class="bar stub"><span class="grip"></span></div></div>

  <section class="canvas">
    <svg class="scene" viewBox="202 168 1164 278" preserveAspectRatio="xMinYMin slice">
      <defs>
        <path id="hk" d="M0 0L30 -124M0 0l-2 -16M0 0l5 -9"/>
        <path id="hl" d="M0 0L30 -114M0 0l9 -11"/>
        <path id="hu" d="M0 0v-16l16 -60"/>
        <path id="tk" d="M0 0l24 3"/>
      </defs>
      <g class="hatch">
        <use href="#hl" x="507" y="271"/><use href="#hl" x="529" y="281"/><use href="#hl" x="550" y="291"/><use href="#hl" x="572" y="301"/><use href="#hl" x="593" y="311"/><use href="#hl" x="615" y="321"/><use href="#hl" x="637" y="331"/><use href="#hl" x="659" y="341"/><use href="#hl" x="680" y="351"/><use href="#hl" x="701" y="362"/><use href="#hl" x="707" y="364"/>
        <use href="#hk" x="730" y="367"/><use href="#hk" x="752" y="370"/><use href="#hk" x="775" y="373"/><use href="#hk" x="797" y="376"/><use href="#hk" x="819" y="380"/><use href="#hk" x="841" y="383"/><use href="#hk" x="864" y="386"/><use href="#hk" x="886" y="389"/><use href="#hk" x="909" y="393"/>
        <use href="#hu" x="733" y="207"/><use href="#hu" x="756" y="210"/><use href="#hu" x="778" y="213"/><use href="#hu" x="800" y="216"/><use href="#hu" x="822" y="219"/><use href="#hu" x="844" y="222"/><use href="#hu" x="866" y="225"/><use href="#hu" x="889" y="228"/><use href="#hu" x="911" y="222"/>
        <use href="#tk" x="910" y="230"/><use href="#tk" x="911" y="244"/><use href="#tk" x="913" y="258"/><use href="#tk" x="914" y="272"/><use href="#tk" x="915" y="286"/><use href="#tk" x="917" y="299"/><use href="#tk" x="919" y="313"/><use href="#tk" x="921" y="327"/><use href="#tk" x="922" y="340"/><use href="#tk" x="924" y="354"/><use href="#tk" x="926" y="368"/><use href="#tk" x="928" y="382"/><use href="#tk" x="929" y="396"/>
        <use href="#tk" x="948" y="177"/><use href="#tk" x="946" y="190"/><use href="#tk" x="944" y="204"/><use href="#tk" x="950" y="217"/><use href="#tk" x="953" y="232"/><use href="#tk" x="956" y="246"/><use href="#tk" x="960" y="260"/><use href="#tk" x="962" y="274"/><use href="#tk" x="964" y="286"/>
        <path d="M497 168L480 232M501 168L482 244M504 168L484 255M511 168L487 258M517 168L500 232M535 168L514 236M561 168L534 268M594 168l-18 58M570 168l-6 20M481 229l22 3M481 238l24 4M482 249l24 4M485 260l23 3M503 222l10 14M521 217l14 16M541 213l13 16M561 209l14 16M582 204l13 16M603 195l13 17M625 190l13 16"/>
        <path d="M640 190l16 18M686 185l14 15M596 192l16 16M728 246l15 -4M743 240l-33 122M909 393l34-127M921 222l30-54M934 212l14-44"/>
        <path d="M956 172l-16 64M960 174l-18 72M964 178l-20 82M968 182l-22 98M972 188l-24 108M973 204l-24 108M977 220l-26 108M979 232l-27 108M981 246l-27 106M983 260l-27 104M985 276l-28 104M986 290l-28 104M928 382l0 18l22 4M934 394l22-84"/>
      </g>
      <g class="dred"><path d="M467 168L498 446M603 168L634 446M678 168L711 446M841 208L862 392M877 215L898 398M520 220L742 325"/></g>
      <g class="red"><path d="M540 168L1366 287M202 207L1366 374M295 348L307 446M1053 194L1085 446M1049 160L1051 172"/></g>
      <g class="grn"><path d="M742 325L1000 446M702 370L864 446M862 392L867 446M898 398L903 446M957 407L961 446M840 353L866 400M852 376L810 421M798 399L823 444M379 178L428 168M379 248L474 228M379 250L407 259"/><circle cx="213" cy="209" r="11"/><g stroke-dasharray="4 2"><circle cx="628" cy="181" r="12"/><circle cx="1053" cy="181" r="12"/></g></g>
      <g class="ring"><circle cx="783" cy="307" r="123"/><circle cx="783" cy="183" r="8"/><circle cx="783" cy="430" r="8"/><circle cx="660" cy="307" r="8"/><circle cx="907" cy="307" r="8"/></g>
      <g class="olive"><path d="M557 168L600 172L681 185M617 168L822 266l6 -6M668 168L673 225l-10 -2M937 221L984 228V220"/></g>
      <path class="yel" d="M681 185L937 221"/>
      <path class="thin" d="M691 168L934 283"/>
      <g class="wht"><path d="M492 168L474 227L478 265L702 370L957 407L991 290L976 168M507 168L478 265M474 227L681 185L686 168M555 168L736 254L991 290M736 254L702 370M951 168L936 221L957 407"/></g>
      <g class="lbl"><text x="1049" y="186">5</text><text x="623" y="186">6</text><text transform="translate(831 411) rotate(-62)">800</text></g>
      <g class="ax"><path d="M257 396L255 372" stroke="#0f0"/><path d="M251 374l3 -9l5 9z" fill="#0f0"/><path d="M258 395L264 370" stroke="#0080ff"/><path d="M260 368l8 -11l1 14z" fill="#0080ff"/><path d="M258 396L294 401" stroke="#f00"/><path d="M293 397l12 5l-13 3z" fill="#f00"/><text x="255" y="360" fill="#0080ff">Z</text><text x="264" y="378" class="sm" fill="#0f0">Y</text><text x="291" y="398" fill="#f00">X</text></g>
    </svg>
    <div class="dlg">
      <h3>钢筋显示控制面板</h3>
      <div class="opts">
        <label><input type="checkbox" checked>U形构造封边钢筋</label>
        <label><input type="checkbox" checked>显示其它图元</label>
        <label><input type="checkbox" checked>显示详细公式</label>
      </div>
    </div>
  </section>

  <div class="row r5"><div class="bar">
    <span class="grip"></span>
    <button class="t"><svg class="i"><use href="#isect"/></svg>交点</button>
    <button class="t on"><svg class="i"><use href="#perp"/></svg>垂点</button>
    <button class="t on"><svg class="i"><use href="#mid"/></svg>中点</button>
    <button class="t on"><svg class="i"><use href="#vert"/></svg>顶点</button>
    <button class="t"><svg class="i"><use href="#coord"/></svg>坐标</button>
  </div></div>

  <div class="row r6"><div class="bar">
    <span class="grip"></span>
    <button class="t"><svg class="i"><use href="#ortho"/></svg>正交</button>
    <button class="t on"><svg class="i"><use href="#osnap"/></svg>对象捕捉</button>
    <button class="t on"><svg class="i"><use href="#dyn"/></svg>动态输入</button>
  </div>
  <div class="bar offs">
    <span class="grip"></span>
    <span class="combo c2"><select aria-label="偏移方式"><option>不偏移</option></select></span>
    <span class="sep"></span>
    <label for="ox">X=</label><span class="spin"><input id="ox" value="0" disabled></span><span>mm</span>
    <label for="oy" class="gapl">Y=</label><span class="spin"><input id="oy" value="0" disabled></span><span>mm</span>
    <span class="sep"></span>
    <label class="rot"><input type="checkbox">旋转</label>
    <span class="spin wide"><input aria-label="角度" value="0.000" disabled></span><span>°</span>
  </div></div>

  <div class="bottom">
    <div class="gutter"><svg viewBox="0 0 10 10"><path d="M0 0h10v10H0z" fill="#fff" stroke="#7a4a4a"/><path d="M2 2l6 6M8 2L2 8" stroke="#222" stroke-width="1.500"/></svg></div>
    <section class="panel">
      <div class="bar gbar">
        <button class="t n" disabled aria-label="首行"><svg class="i"><use href="#first"/></svg></button>
        <button class="t n" disabled aria-label="上一行"><svg class="i"><use href="#prev"/></svg></button>
        <button class="t n" aria-label="下一行"><svg class="i"><use href="#next"/></svg></button>
        <button class="t n" aria-label="末行"><svg class="i"><use href="#last"/></svg></button>
        <span class="sep"></span>
        <button class="t" disabled aria-label="上移"><svg class="i"><use href="#up"/></svg></button>
        <button class="t" aria-label="下移"><svg class="i"><use href="#down"/></svg></button>
        <span class="sep"></span>
        <button class="t" disabled><svg class="i"><use href="#ins"/></svg>插入</button>
        <button class="t" disabled><svg class="i"><use href="#del"/></svg>删除</button>
        <button class="t"><svg class="i"><use href="#scale"/></svg>缩尺配筋</button>
        <button class="t"><svg class="i"><use href="#info"/></svg>钢筋信息</button>
        <button class="t"><svg class="i"><use href="#lib"/></svg>钢筋图库</button>
        <button class="t dd near"><svg class="i"><use href="#other"/></svg>其他</button>
        <button class="t">关闭</button>
        <span class="sep"></span>
        <span class="total">单构件钢筋总重(kg) : 161.393</span>
      </div>
      <div class="gridbox">
        <div class="gridclip">
        <table class="grid">
          <colgroup><col class="w33"><col class="w73"><col class="w56"><col class="w36"><col class="w33"><col class="w201"><col class="w166"><col class="w156"><col class="w61"><col class="w122"><col class="w39"><col class="w49"><col class="w61"><col></colgroup>
          <thead><tr><th></th><th class="cur">筋号</th><th>直径<b>(mm)</b></th><th>级别</th><th>图号</th><th>图形</th><th>计算公式</th><th>公式描述</th><th>长度<b>(mm)</b></th><th>根数</th><th>搭接</th><th>损耗<b>(%)</b></th><th>单重<b>(kg)</b></th><th>总重<b>(kg)</b></th></tr></thead>
          <tbody>
          <tr class="cur"><th>1*</th><td class="nm">侧面纵筋.1</td><td>10</td><td class="c"><svg class="dia" viewBox="0 0 11 11"><path d="M5.500 0v10M2.500 2.500h6M1 4.500h9M2.500 6.500h6M2.500 2v5M8.500 2v5M3 9.500h5"/></svg></td><td>18</td>
            <td class="shp"><svg viewBox="0 0 200 33"><path d="M33 9v14h138"/><text x="9" y="21">150</text><text class="r" x="96" y="16">2368</text></svg></td>
            <td>2058+15*d-40+max(35*d,200)</td><td class="z">净长+弯折-保护层+锚固长度</td><td>2518</td><td>10</td><td>0</td><td>0</td><td>1.554</td><td>15.536</td></tr>
          <tr><th>2</th><td class="nm">侧面纵筋.2</td><td>10</td><td class="c"><svg class="dia" viewBox="0 0 11 11"><path d="M5.500 0v10M2.500 2.500h6M1 4.500h9M2.500 6.500h6M2.500 2v5M8.500 2v5M3 9.500h5"/></svg></td><td>18</td>
            <td class="shp"><svg viewBox="0 0 200 33"><path d="M33 9v14h138"/><text x="9" y="21">150</text><text class="r" x="96" y="16">2441</text></svg></td>
            <td>2131+max(35*d,200)+15*d-40</td><td class="z">净长+锚固长度+弯折-保护层</td><td>2591</td><td>10</td><td>0</td><td>0</td><td>1.599</td><td>15.986</td></tr>
          <tr><th>3</th><td class="nm">侧面纵筋.3</td><td>10</td><td class="c"><svg class="dia" viewBox="0 0 11 11"><path d="M5.500 0v10M2.500 2.500h6M1 4.500h9M2.500 6.500h6M2.500 2v5M8.500 2v5M3 9.500h5"/></svg></td><td>64</td>
            <td class="shp"><svg viewBox="0 0 200 33"><path d="M40 8v14h119v-14"/><text x="19" y="19">150</text><text x="161" y="20">150</text><text class="r" x="99" y="19">2420</text></svg></td>
            <td>2500+15*d-40+15*d-40</td><td class="z">净长+弯折-保护层+弯折-保护层</td><td>2720</td><td>5</td><td>0</td><td>0</td><td>1.678</td><td>8.391</td></tr>
          <tr><th>4</th><td class="nm">侧面纵筋.4</td><td>10</td><td class="c"><svg class="dia" viewBox="0 0 11 11"><path d="M5.500 0v10M2.500 2.500h6M1 4.500h9M2.500 6.500h6M2.500 2v5M8.500 2v5M3 9.500h5"/></svg></td><td>64</td>
            <td class="shp"><svg viewBox="0 0 200 33"><path d="M40 8v14h119v-14"/><text x="19" y="19">150</text><text x="161" y="20">150</text><text class="r" x="99" y="19">420</text></svg></td>
            <td>500+15*d-40+15*d-40</td><td class="z">净长+弯折-保护层+弯折-保护层</td><td>720</td><td>5</td><td>0</td><td>0</td><td>0.444</td><td>2.221</td></tr>
          </tbody>
        </table>
        </div>
        <div class="vs"><i class="a up"></i><span class="thumb short"></span><span class="s2"></span><i class="a dn"></i></div>
        <div class="hs"><i class="a lf"></i><span class="ht"></span><span class="hr"></span><i class="a rt"></i></div>
      </div>
    </section>
  </div>
</main>
</div>

<footer class="status">
  <span class="f1 m">X=346009 Y=7366</span><span class="f2">层高:<b>3.55m</b></span><span class="f3">底标高:<b>-3.58m</b></span><span class="f4 m">1(3)</span><span class="f5"></span><span class="f6 m">180 FPS</span>
</footer>

<nav class="task">
  <button class="start" aria-label="开始"><svg viewBox="0 0 18 18" width="18" height="18"><path d="M1 3l7-1v6.500H1zM9 2l8-1v7.500H9zM1 9.500h7V16l-7-1zM9 9.500h8V17l-8-1z" fill="#fff"/></svg></button>
  <label class="search"><svg viewBox="0 0 22 22" width="22" height="22"><circle cx="11" cy="11" r="9" fill="none" stroke="#fff" stroke-width="2.500"/></svg><input type="text" placeholder="在这里输入你要搜索的内容"><svg viewBox="0 0 12 18" width="12" height="18"><path d="M3.500 1.500h5v9h-5zM1.500 8v5h9V8M6 13v4M3 17.500h6" fill="none" stroke="#8a8a8a"/></svg></label>
  <div class="apps a50">
    <button aria-label="任务视图"><svg viewBox="0 0 24 24"><path d="M7.500 5.500h9v13h-9zM4.500 7.500h-2v9h2M19.500 7.500h2v9h-2" stroke="#fff" fill="none"/></svg></button>
    <button aria-label="风扇"><svg viewBox="0 0 24 24"><path d="M11.500 11C4 13 1 9 2 5s8-4 9.500 6zM13 11.500C11 4 15 1 19 2s4 8-6 9.500zM12.500 13c7.500-2 10.500 2 9.500 6s-8 4-9.500-6zM11 12.500c2 7.500-2 10.500-6 9.500s-4-8 6-9.500z" fill="#e8e8e8"/></svg></button>
    <button aria-label="浏览器"><svg viewBox="0 0 24 24"><path d="M6 12h13c0-9-13-9-13 0 0 8 10 8 12 3" stroke="#f0f0f0" stroke-width="3.500" fill="none"/><path d="M4 22C-2 18 14 0 21 3" stroke="#f0f0f0" stroke-width="1.500" fill="none"/></svg></button>
    <button aria-label="提醒"><svg viewBox="0 0 28 28"><path d="M16 9A9 9 0 1 0 19 22M16 13a6 6 0 1 0 0 8M12 14c5-1 6 7 0 7-3 0-3-4 0-4" stroke="#bbb" stroke-width="1.800" fill="none"/><path d="M21 1c5 1 3 8 6 11H15c3-3 1-10 6-11zM19 13h4l-2 2z" fill="#e8b322"/></svg></button>
    <button aria-label="Edge"><svg viewBox="0 0 24 24"><path d="M2 11C4-1 22-1 22 11v3H9c0 6 8 6 12 3v4C12 26 3 22 5 14c1-4 4-5 6-6-1 1-2 2-2 3h8c0-9-12-6-15 0z" fill="#0f7bdc"/></svg></button>
  </div>
  <div class="apps a47">
    <button aria-label="应用商店"><svg viewBox="0 0 24 24"><path d="M1 8h22l-1 14H2z" fill="#fff"/><path d="M8 8c0-8 8-8 8 0" stroke="#fff" fill="none" stroke-width="1.500"/><path d="M7 10h4.500v4.500H7z" fill="#f25022"/><path d="M12.500 10H17v4.500h-4.500z" fill="#7fba00"/><path d="M7 15.500h4.500V20H7z" fill="#00a4ef"/><path d="M12.500 15.500H17V20h-4.500z" fill="#ffb900"/></svg></button>
    <button class="run" aria-label="文件资源管理器"><svg viewBox="0 0 24 24"><path d="M1 3h9l1 2h11v17H1z" fill="#f7d774"/><path d="M1 8h21v14H1z" fill="#fde9a5"/><path d="M5 22v-8h14v8h-4v-4H9v4z" fill="#37a7df"/></svg></button>
    <button aria-label="IE"><svg viewBox="0 0 24 24"><path d="M6 13h13c0-9-13-9-13 0 0 7 10 8 12 2" stroke="#3aa5ea" stroke-width="4" fill="none"/><path d="M4 22C-2 18 15-1 22 3" stroke="#f2c31b" stroke-width="1.800" fill="none"/></svg></button>
    <button class="run" aria-label="记事"><svg viewBox="0 0 24 24"><rect width="24" height="24" rx="2" fill="#f09a1c"/><path d="M3 5l13-2 3 16-14 2z" fill="#fff"/><path d="M6 9l8-1M6 12l8-1M7 15l7-1" stroke="#888"/><path d="M22 2l-9 12-1 4 3-2 9-12z" fill="#b9492c"/></svg></button>
    <button class="run" aria-label="广联达"><svg viewBox="0 0 24 24"><path d="M23 1c-2 3-5 4-8 4-6 1-8 6-6 10 2 3 7 2 7-1 0-2-2-3-4-3 3-2 10-1 11 3 0 5-5 9-11 9C5 23 1 19 1 13 1 3 14-1 23 1z" fill="#1a8fe8"/></svg></button>
    <button class="run" aria-label="安全浏览器"><svg viewBox="0 0 24 24"><circle cx="12" cy="12" r="11" fill="#56b52f"/><path d="M7 12h10c0-6-10-6-10 0 0 6 8 6 9 2" stroke="#fff" stroke-width="2.800" fill="none"/><path d="M4 4L22 1" stroke="#aadf62" stroke-width="2"/></svg></button>
    <button class="act" aria-label="钢筋算量"><svg viewBox="0 0 16 16"><use href="#logo"/></svg></button>
  </div>
  <div class="cpu">36%<br>CPU使用</div>
  <div class="tray">
    <svg viewBox="0 0 16 16"><path d="M2 11l6-6 6 6"/></svg>
    <svg viewBox="0 0 16 16"><path d="M4 4.500h11v8H6M2 1v3M5 1v3M1 4h5v3H1zM3.500 7v3"/><path d="M7 6h7v5H7z" fill="#fff"/></svg>
    <svg viewBox="0 0 16 16"><path d="M1 15C1 8 8 2 15 2M4 15c0-5 5-10 11-10M8 15c0-3 3-6 7-6M12 15c0-1 1-2 3-2"/></svg>
    <svg viewBox="0 0 16 16"><path d="M1 6h3l4-4v12l-4-4H1zM10 5c2 2 2 4 0 6M12 3c3 3 3 7 0 10M14 1c4 4 4 10 0 14"/></svg>
    <svg class="kb" viewBox="0 0 24 16"><path d="M.5 2.500h22v11H.5z"/><path d="M3 5.500h18M3 8.500h18" stroke-dasharray="2 1"/><path d="M6 11.500h12"/></svg>
    <span>中</span>
    <svg viewBox="0 0 16 16" class="sg"><use href="#sogou"/></svg>
  </div>
  <div class="clock">18:27<br>2017/12/1</div>
  <button class="note" aria-label="通知 20"><svg viewBox="0 0 18 18" width="18" height="18"><path d="M1 1h16v12h-6l-3 3v-3H1z" fill="#fff"/><path d="M3 4h11M3 7h11M3 10h8" stroke="#111"/></svg><span>20</span></button>
</nav>

<div class="ime">
  <svg class="big" viewBox="0 0 16 16"><use href="#sogou"/></svg>
  <b>中</b>
  <svg viewBox="0 0 16 16"><circle cx="4" cy="5" r="2" fill="none" stroke="#1e73c8" stroke-width="1.500"/><path d="M11 9h3v3l-2 3" stroke="#1e73c8" stroke-width="2" fill="none"/></svg>
  <svg viewBox="0 0 16 16"><circle cx="8" cy="8" r="7" fill="none" stroke="#1e73c8" stroke-width="1.600"/><path d="M4.500 9c1 4 6 4 7 0" stroke="#1e73c8" stroke-width="1.500" fill="none"/><path d="M5 5v2M11 5v2" stroke="#1e73c8" stroke-width="2"/></svg>
  <svg viewBox="0 0 16 16"><rect x="5.500" y="0" width="5" height="10" rx="2.500" fill="#1e73c8"/><path d="M3 7c0 7 10 7 10 0M8 12v3M5 15h6" stroke="#1e73c8" stroke-width="1.500" fill="none"/></svg>
  <svg viewBox="0 0 16 16"><rect y="2" width="16" height="12" rx="1" fill="#1e73c8"/><path d="M2 5.500h12M2 8.500h12" stroke="#fff" stroke-width="1.500" stroke-dasharray="2 1"/><path d="M4 11.500h8" stroke="#fff" stroke-width="1.500"/></svg>
  <svg viewBox="0 0 16 16"><circle cx="6" cy="4" r="3.500" fill="#b5bfd2"/><path d="M0 14c0-8 11-8 11-3v3z" fill="#b5bfd2"/><path d="M8 8h8v7H8z" fill="#d5dae5"/><path d="M10 10v4M12 10h2v4h-2" stroke="#8793ac" fill="none"/></svg>
  <svg viewBox="0 0 16 16"><path d="M5 1c1 2 5 2 6 0l5 3-2 4-2-1v8H4V7L2 8 0 4z" fill="#1e73c8"/></svg>
  <svg viewBox="0 0 16 16"><path d="M15 4l-3 3-3-3 3-3C9-1 6 2 7 6l-6 7 2 3 7-6c4 1 7-2 5-6z" fill="#1e73c8"/></svg>
</div>
<div class="speed">
  <span class="ball">68%</span>
  <span class="ar"><i class="red">↑</i><i class="green">↓</i></span>
  <span class="rate">0K/s<br>0K/s</span>
  <svg viewBox="0 0 20 20" width="20" height="20"><circle cx="9" cy="11" r="9" fill="#3f83d8"/><path d="M9 6v10M4 11h10" stroke="#fff" stroke-width="2.200"/><circle cx="15" cy="5" r="4" fill="#e0262b"/></svg>
</div>
</body>
</html>
```
FILE: styles.css
```css
* { box-sizing: border-box; }
html, body { height: 100%; }
body { margin: 0; display: flex; flex-direction: column; background: #f0f0f0; color: #000; overflow: hidden; position: relative; font: 12px/16px "Noto Sans CJK SC", "Noto Sans", sans-serif; }
button, select, input { font: inherit; color: inherit; margin: 0; }
button { border: 0; background: none; padding: 0; white-space: nowrap; }
h1, h2, h3, ul { margin: 0; padding: 0; font-weight: normal; }
.defs { position: absolute; width: 0; height: 0; }
.i { width: 16px; height: 16px; flex: none; display: block; }

.titlebar { height: 24px; flex: none; background: #fff; display: flex; align-items: center; gap: 5px; padding-left: 2px; }
.titlebar h1 { font-size: 12px; flex: 1; white-space: nowrap; }
.titlebar h1 span { font-size: 13px; }
.winbtns { display: flex; }
.winbtns button { width: 45px; height: 22px; }
.winbtns svg { width: 12px; height: 12px; fill: none; stroke: #111; display: block; margin: 0 auto; }

.menubar { height: 28px; flex: none; display: flex; align-items: center; background: #f2f2f2; }
.menus { display: flex; align-items: center; gap: 11px; padding-left: 7px; flex: 1026 0 0; min-width: 0; overflow: hidden; }
.menus .t { margin: 0 -8px 0 -6px; }
.news { flex: 100 0 0; color: #5a2d0c; text-decoration: none; white-space: nowrap; }
.account { flex: 240 0 0; display: flex; align-items: center; gap: 5px; background: #fafafa; height: 26px; white-space: nowrap; }
.account .i { margin-left: 3px; }
.account .t .i { margin-left: 0; }

.toprow { height: 31px; flex: none; display: grid; grid-template-columns: 148px 555fr 663fr; gap: 0; align-items: center; padding-bottom: 1px; }
.bar { display: flex; align-items: center; height: 28px; background: linear-gradient(#fcfcfc, #f1f1f1); border-radius: 3px; white-space: nowrap; padding-right: 2px; }
.toprow .bar { margin-right: 2px; }
.toprow .view { padding-left: 1px; margin-right: 0; }
.lead { width: 6px; }
.file { padding-left: 3px; }
.file .t { padding: 0 2px 0 3px; }
.file .dd { padding-right: 16px; }
.t { display: inline-flex; align-items: center; gap: 4px; height: 23px; padding: 0 4px 0 3px; position: relative; }
.t:disabled { color: #8f8f8f; }
.t.dd { padding-right: 16px; }
.t.dd::after { content: ""; position: absolute; right: 5px; top: 10px; border: 3px solid transparent; border-top: 3px solid #000; border-bottom: 0; }
.t.dd.near { padding-right: 13px; }
.t.dd.near::after { right: 4px; }
.t:disabled::after { border-top-color: #888 !important; }
.t.on { background: #dfedf9; border: 1px solid #0078d7; padding: 0 3px 0 2px; }
.t.wh { background: #fff; }
.sigma { width: 14px; font: bold 15px/16px "Liberation Serif", serif; text-align: center; }
.sep { width: 1px; height: 14px; background: #b5b5b5; margin: 0 2px 0 3px; flex: none; }
.sep.tall { height: 24px; margin: 0 5px 0 3px; background: #999; }
.grip { width: 3px; height: 15px; margin: 0 0 0 4px; flex: none; background: repeating-linear-gradient(#b0b0b0 0 2px, transparent 2px 4px); }
.more { margin-left: auto; width: 12px; align-self: flex-start; font: bold 15px/14px "Liberation Sans", sans-serif; padding-right: 3px; }

.work { flex: 1; min-height: 0; display: flex; gap: 5px; }
.side { width: 197px; flex: none; display: flex; flex-direction: column; padding-right: 1px; }
.side h2 { height: 16px; margin-top: 1px; flex: none; background: linear-gradient(90deg, #1257e0, #0054e3); color: #fff; display: flex; justify-content: space-between; font-size: 12px; }
.side h2 span { display: flex; gap: 9px; padding: 3px 4px; }
.side h2 svg { width: 10px; height: 10px; stroke: #fff; fill: none; }
.tab { flex: none; height: 22px; border: 1px solid #a0a0a0; border-width: 1px 1px 0 1px; background: #efefef; }
.pm { height: 28px; flex: none; border: 1px solid #a0a0a0; border-bottom: 0; padding: 6px; background: linear-gradient(#fdfdfd, #f3f3f3); }
.treebox { flex: 1; min-height: 0; border: 1px solid #7d8290; background: #fff; margin: 0 1px 2px 2px; display: flex; overflow: hidden; }
.side > .tab:last-child { border-bottom-width: 1px; margin-bottom: 2px; height: 23px; }
.tree, .tree ul { list-style: none; }
.tree { flex: 1; min-width: 0; padding: 1px 0 0 4px; font: 12px/16px "Liberation Serif", "Noto Sans CJK SC", serif; }
.tree .i { display: inline-block; vertical-align: top; }
.g { padding-left: 20px; position: relative; white-space: nowrap; }
.g > .i { margin-right: 4px; }
.g::before { content: ""; position: absolute; left: 5px; top: 4px; width: 5px; height: 5px; border: solid #999; border-width: 0 1px 1px 0; transform: rotate(-45deg); }
.g.o::before { left: 5px; top: 3px; border-color: #333; border-width: 0 2px 2px 0; transform: rotate(45deg); }
.g.o::after { content: ""; position: absolute; left: 8px; top: 16px; bottom: 0; border-left: 1px dotted #888; }
.g ul { margin-left: 8px; position: relative; }
.g ul li { position: relative; height: 16px; padding-left: 12px; width: max-content; }
.g ul li .i { margin-right: 3px; }
.g ul li::before { content: ""; position: absolute; left: 0; top: -8px; width: 10px; height: 16px; border: dotted #888; border-width: 0 0 1px 1px; }
.g ul li.sel { background: linear-gradient(90deg, transparent 10px, #d9d9d9 10px); padding-right: 4px; }
.vs { width: 16px; flex: none; background: #f0f0f0; display: flex; flex-direction: column; align-items: center; }
.a { width: 7px; height: 7px; border: solid #555; border-width: 2px 0 0 2px; flex: none; }
.a.up { transform: rotate(45deg); margin: 7px 0 3px; }
.a.dn { transform: rotate(225deg); margin: 2px 0 7px; }
.a.lf { transform: rotate(-45deg); margin: 0 4px 0 7px; }
.a.rt { transform: rotate(135deg); margin: 0 7px 0 4px; }
.s1 { flex: 80; }
.thumb { flex: 265; width: 16px; background: #cdcdcd; }
.s2 { flex: 107; }

.main { flex: 1; min-width: 0; display: flex; flex-direction: column; }
.row { display: flex; align-items: center; flex: none; padding-left: 1px; }
.r2 { height: 28px; }
.r3 { height: 27px; }
.r4 { height: 30px; }
.r5, .r6 { height: 28px; }
.row .bar { height: 26px; padding-right: 1px; }
.row .grow { flex: 1; }
.stub { margin-left: 4px; width: 32px; }
.axis { margin-left: 74px; }
.combo { position: relative; width: 68px; height: 22px; margin-right: 4px; background: linear-gradient(90deg, #fff 57px, #f3f3f3 57px); }
.combo.c1 { width: 56px; background: linear-gradient(90deg, #fff 45px, #f3f3f3 45px); }
.combo.c2 { width: 59px; margin-right: 1px; }
.r3 .grip { margin-right: 2px; }
.r3 .axis .grip { margin-right: 0; }
.r3 .sep { margin: 0 1px 0 2px; }
.r4 .combo { margin-right: 2px; }
.combo select { appearance: none; border: 0; background: none; width: 100%; height: 22px; padding: 0 1px; }
.combo.c2 select { padding-left: 3px; }
.combo::after { content: ""; position: absolute; right: 3px; top: 10px; border: 3px solid transparent; border-top: 3px solid #000; border-bottom: 0; pointer-events: none; }

.canvas { flex: 1; min-height: 0; background: #000; position: relative; overflow: hidden; }
.scene { width: 100%; height: 100%; display: block; fill: none; shape-rendering: crispEdges; }
.hatch { stroke: #9c8b85; stroke-width: 1; }
.dred { stroke: #8b0000; }
.red { stroke: #f00; }
.grn { stroke: #008000; }
.ring { stroke: #606060; }
.olive { stroke: #808000; stroke-width: 2; }
.yel { stroke: #ffff50; stroke-width: 2; }
.thin { stroke: #fff; }
.wht { stroke: #fff; stroke-width: 2; }
.lbl text { font: 15px "Liberation Sans", sans-serif; fill: #c8c8c8; }
.ax path { stroke-width: 4; }
.ax text { font: 14px "Liberation Sans", sans-serif; }
.ax .sm { font-size: 11px; }
.dlg { position: absolute; left: 9px; top: 2px; width: 168px; height: 179px; background: #fff; border: 1px solid #555; display: flex; flex-direction: column; }
.dlg h3 { height: 31px; padding: 7px 8px; line-height: 16px; font-size: 12px; color: #999; }
.opts { flex: 1; border: 1px solid #7d8290; margin: 0 1px; padding: 1px 2px; font: 12px/12px "Liberation Serif", "Noto Sans CJK SC", serif; }
.opts label { display: flex; align-items: center; height: 12px; gap: 4px; }
.opts input, .rot input { appearance: none; width: 11px; height: 11px; border: 1px solid #888; background: #fff; position: relative; flex: none; }
.opts input:checked::after { content: ""; position: absolute; left: 2px; top: 1px; width: 6px; height: 3px; border: solid #444; border-width: 0 0 1px 1px; transform: rotate(-45deg); }

.r5 { padding-left: 228px; }
.offs { margin-left: 267px; color: #777; }
.offs .grip { margin-right: 2px; }
.offs select, .rot { color: #000; }
.spin { position: relative; display: block; width: 58px; height: 23px; margin: 0 2px 0 3px; }
.spin.wide { width: 68px; margin-left: 3px; }
.spin input { width: 100%; height: 23px; border: 1px solid #777; background: #f3f3f3; text-align: right; padding: 0 14px; }
.spin::before, .spin::after { content: ""; position: absolute; right: 4px; border: 3px solid transparent; }
.spin::before { top: 4px; border-top: 0; border-bottom: 3px solid #666; }
.spin::after { bottom: 4px; border-bottom: 0; border-top: 3px solid #666; }
.gapl { margin-left: 4px; }
.rot { display: flex; align-items: center; gap: 8px; }

.bottom { flex: none; display: flex; padding: 6px 2px 2px 0; }
.gutter { width: 13px; flex: none; padding-left: 1px; background: radial-gradient(circle, #bbb 1px, transparent 1px) 0 0 / 5px 5px; }
.gutter svg { width: 10px; height: 10px; display: block; background: #f0f0f0; }
.panel { flex: 1; min-width: 0; }
.gbar { height: 24px; }
.gbar .n { padding: 0 5px 0 3px; margin-right: 1px; }
.gbar .sep { margin: 0 1px; }
.total { padding-left: 5px; }
.gridbox { border: 1px solid #999; margin-top: 1px; display: grid; grid-template-columns: 1fr 16px; background: #f0f0f0; }
.gridclip { overflow: hidden; height: 154px; }
.grid { width: 100%; border-collapse: separate; border-spacing: 0; table-layout: fixed; font: 10px/12px "DejaVu Sans Mono", "Liberation Mono", "Noto Sans CJK SC", monospace; }
.w33 { width: 33px; } .w73 { width: 73px; } .w56 { width: 56px; } .w36 { width: 36px; } .w201 { width: 201px; } .w166 { width: 166px; } .w156 { width: 156px; } .w61 { width: 61px; } .w122 { width: 122px; } .w39 { width: 39px; } .w49 { width: 49px; }
.grid th, .grid td { border: solid #b8b8b8; border-width: 0 1px 1px 0; padding: 0 1px; height: 34px; text-align: left; font-weight: normal; white-space: nowrap; overflow: hidden; background: #ccffda; }
.grid thead th { height: 20px; text-align: center; background: linear-gradient(#fff, #efefef); font-size: 12px; }
.grid th b { font-weight: normal; font-size: 10px; }
.grid tbody th { text-align: center; background: linear-gradient(#fff, #f0f0f0); }
.grid thead th.cur { background: linear-gradient(#fbd69a, #f3bb60); color: #5a1060; }
.grid .cur > th { background: #ffd089; color: #5a1060; }
.grid td.nm { border-right: 1px solid #000; font: 12px/12px "Liberation Serif", "Noto Sans CJK SC", serif; padding-left: 2px; }
.grid tr.cur td.nm { background: #aee9d8; }
.grid td.z { font: 12px/12px "Liberation Serif", "Noto Sans CJK SC", serif; white-space: normal; word-break: break-all; padding-right: 3px; }
.grid td.c { text-align: center; }
.grid td.shp { padding: 0; }
.dia { width: 11px; height: 11px; fill: none; stroke: #000; display: block; margin: 0 auto; }
.shp svg { width: 100%; height: 33px; display: block; }
.shp path { stroke: #000; stroke-width: 2; fill: none; }
.shp text { font: 11px "Liberation Sans", sans-serif; }
.shp .r { fill: #f00; text-anchor: middle; }
.thumb.short { flex: 0 0 36px; }
.gridbox .s2 { flex: 1; }
.hs { height: 16px; display: flex; align-items: center; grid-column: 1; border-top: 1px solid #fff; }
.ht { flex: 668; height: 15px; background: #cdcdcd; }
.hr { flex: 427; }

.status { height: 21px; flex: none; display: flex; gap: 3px; font: 12px/17px "Liberation Serif", "Noto Sans CJK SC", serif; padding-bottom: 1px; background: #f4f4f4; }
.status span { border: 1px solid #d0d0d0; background: linear-gradient(#fff, #f6f6f6); padding: 0 1px; white-space: nowrap; }
.status b, .status .m { font: 10px/18px "DejaVu Sans Mono", monospace; }
.f1 { flex: 147 0 0; } .f2 { flex: 77 0 0; } .f3 { flex: 97 0 0; } .f4 { flex: 48 0 0; } .f5 { flex: 913 0 0; } .f6 { flex: 70 0 0; }

.task { height: 40px; flex: none; background: #040c0e; display: flex; align-items: stretch; color: #fff; }
.start { width: 48px; background: #000; display: grid; place-items: center; }
.search { width: 344px; background: #333; display: flex; align-items: center; gap: 6px; padding: 0 14px 0 8px; }
.search input { flex: 1; min-width: 0; border: 0; background: none; outline: 0; font-size: 14px; line-height: 20px; padding: 0; }
.search input::placeholder { color: #9a9a9a; }
.apps { display: flex; }
.apps button { display: grid; place-items: center; position: relative; }
.apps svg { width: 24px; height: 24px; }
.a50 button { width: 50px; }
.a47 button { width: 47px; }
.a47 .run { background: linear-gradient(#76b9ed 0 0) 50% 100% / 38px 3px no-repeat; }
.a47 .act { background: linear-gradient(#76b9ed 0 0) 0 100% / 100% 3px no-repeat, #363f42; }
.cpu { width: 92px; text-align: center; padding-top: 3px; line-height: 17px; }
.tray { display: flex; align-items: center; gap: 9px; margin-left: auto; }
.tray svg { width: 16px; height: 16px; fill: none; stroke: #fff; }
.tray .kb { width: 24px; }
.tray .sg { stroke: none; }
.tray span { font-size: 14px; }
.clock { width: 92px; text-align: center; padding-top: 2px; line-height: 18px; }
.note { width: 43px; position: relative; display: grid; place-items: center; color: #fff; }
.note span { position: absolute; right: 4px; bottom: 3px; width: 20px; height: 20px; border-radius: 10px; background: #333; border: 1px solid #999; font-weight: bold; line-height: 18px; }

.ime { position: absolute; z-index: 2; left: 868px; top: 3px; width: 207px; height: 24px; background: #fff; border: 1px solid #a9c4de; display: flex; align-items: center; justify-content: space-between; padding: 0 4px 0 0; }
.ime svg { width: 16px; height: 16px; flex: none; }
.ime .big { width: 27px; height: 27px; }
.ime b { color: #1e73c8; font-size: 15px; }
.speed { position: absolute; left: 900px; top: 28px; width: 125px; height: 32px; border-radius: 0 16px 16px 0; background: linear-gradient(#f8f8f8, #dcdcdc); border: 1px solid #bbb; box-shadow: 0 1px 3px #888; display: flex; align-items: center; gap: 7px; font-size: 11px; line-height: 15px; padding-right: 6px; }
.ball { width: 46px; height: 46px; flex: none; margin: -12px 0 0 -2px; border-radius: 23px; border: 3px solid #e4e4e4; background: #3fc660; color: #fff; font-size: 15px; line-height: 38px; text-align: center; box-shadow: 0 1px 3px #777; }
.ar { display: grid; font-weight: bold; }
.ar i { font-style: normal; }
.ar .red { color: #e0502f; }
.ar .green { color: #2a9c50; }
.rate { margin-left: auto; }
```
